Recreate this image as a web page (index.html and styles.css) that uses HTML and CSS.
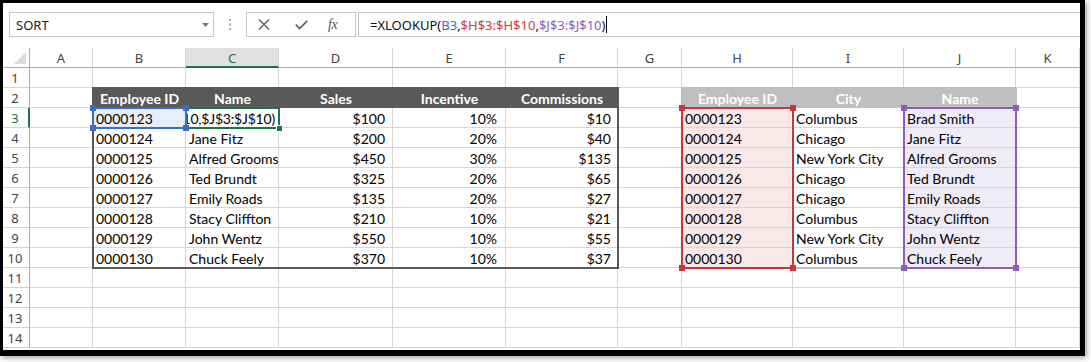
FILE: index.html
```html
<!DOCTYPE html>
<html>
<head>
<meta charset="utf-8">
<link rel="stylesheet" href="styles.css">
</head>
<body>
<div class="frame">
  <div class="fbar">
    <div class="namebox"><span>SORT</span><svg class="dd" width="7" height="4" viewBox="0 0 7 4"><polygon points="0,0 7,0 3.5,4" fill="#7a7a7a"/></svg></div>
    <div class="dots"><svg width="2" height="11" viewBox="0 0 2 11"><rect x="0" y="0" width="2" height="2" fill="#b0b0b0"/><rect x="0" y="4.5" width="2" height="2" fill="#b0b0b0"/><rect x="0" y="9" width="2" height="2" fill="#b0b0b0"/></svg></div>
    <div class="btns">
      <svg class="ix" width="12" height="11" viewBox="0 0 12 11"><path d="M1 0.5 L11 10.5 M11 0.5 L1 10.5" stroke="#5f5f5f" stroke-width="1.4" fill="none"/></svg>
      <svg class="iv" width="13" height="10" viewBox="0 0 13 10"><path d="M0.8 4.6 L4.6 8.6 L12.2 0.8" stroke="#5f5f5f" stroke-width="1.7" fill="none"/></svg>
      <span class="fx">fx</span>
    </div>
    <div class="finput"><span>=XLOOKUP(</span><span class="cb">B3</span><span>,</span><span class="cr">$H$3:$H$10</span><span>,</span><span class="cp">$J$3:$J$10</span><span>)</span><span class="caret"></span></div>
  </div>
  <div class="sheet">
    <div class="grid">
      <div class="corner"><svg width="12" height="12" viewBox="0 0 12 12"><polygon points="12,0 12,12 0,12" fill="#dcdcdc"/></svg></div>
      <div class="ch">A</div><div class="ch">B</div><div class="ch sel">C</div><div class="ch">D</div><div class="ch">E</div><div class="ch">F</div><div class="ch">G</div><div class="ch">H</div><div class="ch">I</div><div class="ch">J</div><div class="ch">K</div>

      <div class="rh">1</div><div class="c"></div><div class="c"></div><div class="c"></div><div class="c"></div><div class="c"></div><div class="c"></div><div class="c"></div><div class="c"></div><div class="c"></div><div class="c"></div><div class="c"></div>

      <div class="rh">2</div><div class="c"></div><div class="c hd">Employee ID</div><div class="c hd">Name</div><div class="c hd">Sales</div><div class="c hd">Incentive</div><div class="c hd">Commissions</div><div class="c"></div><div class="c hg">Employee ID</div><div class="c hg">City</div><div class="c hg">Name</div><div class="c"></div>

      <div class="rh sel">3</div><div class="c"></div><div class="c fb">0000123</div><div class="c edit"><span>$10,$J$3:$J$10)</span></div><div class="c r">$100</div><div class="c r e">10%</div><div class="c r f">$10</div><div class="c"></div><div class="c fr">0000123</div><div class="c">Columbus</div><div class="c fp">Brad Smith</div><div class="c"></div>

      <div class="rh">4</div><div class="c"></div><div class="c">0000124</div><div class="c">Jane Fitz</div><div class="c r">$200</div><div class="c r e">20%</div><div class="c r f">$40</div><div class="c"></div><div class="c fr">0000124</div><div class="c">Chicago</div><div class="c fp">Jane Fitz</div><div class="c"></div>

      <div class="rh">5</div><div class="c"></div><div class="c">0000125</div><div class="c">Alfred Grooms</div><div class="c r">$450</div><div class="c r e">30%</div><div class="c r f">$135</div><div class="c"></div><div class="c fr">0000125</div><div class="c">New York City</div><div class="c fp">Alfred Grooms</div><div class="c"></div>

      <div class="rh">6</div><div class="c"></div><div class="c">0000126</div><div class="c">Ted Brundt</div><div class="c r">$325</div><div class="c r e">20%</div><div class="c r f">$65</div><div class="c"></div><div class="c fr">0000126</div><div class="c">Chicago</div><div class="c fp">Ted Brundt</div><div class="c"></div>

      <div class="rh">7</div><div class="c"></div><div class="c">0000127</div><div class="c">Emily Roads</div><div class="c r">$135</div><div class="c r e">20%</div><div class="c r f">$27</div><div class="c"></div><div class="c fr">0000127</div><div class="c">Chicago</div><div class="c fp">Emily Roads</div><div class="c"></div>

      <div class="rh">8</div><div class="c"></div><div class="c">0000128</div><div class="c">Stacy Cliffton</div><div class="c r">$210</div><div class="c r e">10%</div><div class="c r f">$21</div><div class="c"></div><div class="c fr">0000128</div><div class="c">Columbus</div><div class="c fp">Stacy Cliffton</div><div class="c"></div>

      <div class="rh">9</div><div class="c"></div><div class="c">0000129</div><div class="c">John Wentz</div><div class="c r">$550</div><div class="c r e">10%</div><div class="c r f">$55</div><div class="c"></div><div class="c fr">0000129</div><div class="c">New York City</div><div class="c fp">John Wentz</div><div class="c"></div>

      <div class="rh">10</div><div class="c"></div><div class="c">0000130</div><div class="c">Chuck Feely</div><div class="c r">$370</div><div class="c r e">10%</div><div class="c r f">$37</div><div class="c"></div><div class="c fr">0000130</div><div class="c">Columbus</div><div class="c fp">Chuck Feely</div><div class="c"></div>

      <div class="rh">11</div><div class="c"></div><div class="c"></div><div class="c"></div><div class="c"></div><div class="c"></div><div class="c"></div><div class="c"></div><div class="c"></div><div class="c"></div><div class="c"></div><div class="c"></div>
      <div class="rh">12</div><div class="c"></div><div class="c"></div><div class="c"></div><div class="c"></div><div class="c"></div><div class="c"></div><div class="c"></div><div class="c"></div><div class="c"></div><div class="c"></div><div class="c"></div>
      <div class="rh">13</div><div class="c"></div><div class="c"></div><div class="c"></div><div class="c"></div><div class="c"></div><div class="c"></div><div class="c"></div><div class="c"></div><div class="c"></div><div class="c"></div><div class="c"></div>
      <div class="rh">14</div><div class="c"></div><div class="c"></div><div class="c"></div><div class="c"></div><div class="c"></div><div class="c"></div><div class="c"></div><div class="c"></div><div class="c"></div><div class="c"></div><div class="c"></div>
    </div>
    <div class="ovl">
      <div class="ov ov-tbl"></div>
      <div class="ov ov-rt"></div>
      <div class="ov ov-c3"><i class="fill"></i></div>
      <div class="ov ov-b3"><i class="h tl"></i><i class="h tr"></i><i class="h bl"></i><i class="h br"></i></div>
      <div class="ov ov-h"><i class="h tl"></i><i class="h tr"></i><i class="h bl"></i><i class="h br"></i></div>
      <div class="ov ov-j"><i class="h tl"></i><i class="h tr"></i><i class="h bl"></i><i class="h br"></i></div>
    </div>
  </div>
</div>
</body>
</html>
```
FILE: styles.css
```css
* { box-sizing: border-box; margin: 0; padding: 0; }
html, body { width: 1091px; height: 362px; overflow: hidden; background: #fff; }
body { font-family: "Lato", "Liberation Sans", sans-serif; }

.frame {
  width: 1085px;
  height: 356px;
  border-style: solid;
  border-color: #000;
  border-width: 3px 5px 6px 3px;
  background: #fff;
  box-shadow: 2px 2px 5px rgba(0, 0, 0, 0.35);
  overflow: hidden;
}

/* formula bar */
.fbar {
  height: 45px;
  display: flex;
  align-items: flex-start;
  padding: 9px 0 0 6px;
  font-family: "Noto Sans", "DejaVu Sans", sans-serif;
  font-size: 13px;
  color: #222;
}
.namebox {
  width: 205px;
  height: 25px;
  border: 1px solid #c6c6c6;
  display: flex;
  align-items: center;
  justify-content: space-between;
  padding: 0 4px 0 6px;
}
.dd { margin-top: 1px; }
.dots {
  width: 32px;
  height: 25px;
  display: flex;
  align-items: center;
  justify-content: center;
}
.btns {
  width: 110px;
  height: 25px;
  border: 1px solid #c6c6c6;
  display: flex;
  align-items: center;
  padding-left: 11px;
}
.iv { margin-left: 25px; margin-top: 1px; }
.fx {
  margin-left: 20px;
  font-family: "Liberation Serif", serif;
  font-style: italic;
  font-size: 14px;
  color: #555;
  letter-spacing: -0.5px;
}
.finput {
  flex: 1;
  height: 25px;
  margin-left: 2px;
  border: 1px solid #c6c6c6;
  border-right: none;
  display: flex;
  align-items: center;
  padding-left: 11px;
  white-space: pre;
  color: #111;
}
.cb { color: #3a6ec6; }
.cr { color: #cf3a3e; }
.cp { color: #8c5cbf; }
.caret { width: 1px; height: 17px; background: #000; margin-left: 1px; }

/* sheet */
.sheet { position: relative; height: 302px; }
.grid, .ovl {
  display: grid;
  grid-template-columns: 27px 63px 93px 93px 114px 113px 112px 64px 111px 111px 112px 64px;
  grid-template-rows: repeat(15, 20px);
}
.ovl { position: absolute; top: 0; left: 0; right: 0; bottom: 0; pointer-events: none; }

.corner {
  border-right: 1px solid #ababab;
  border-bottom: 1px solid #ababab;
  display: flex;
  align-items: flex-end;
  justify-content: flex-end;
  padding: 0 3px 3px 0;
}
.ch {
  border-right: 1px solid #d4d4d4;
  border-bottom: 1px solid #ababab;
  font-family: "Noto Sans", "DejaVu Sans", sans-serif;
  font-size: 13px;
  line-height: 18px;
  padding-top: 1px;
  color: #444;
  text-align: center;
}
.ch.sel {
  background: #e1e1e1;
  color: #217346;
  border-bottom: 2px solid #217346;
}
.rh {
  border-right: 1px solid #ababab;
  border-bottom: 1px solid #d4d4d4;
  font-family: "Noto Sans", "DejaVu Sans", sans-serif;
  font-size: 13px;
  line-height: 19px;
  padding-top: 1px;
  color: #444;
  text-align: center;
  padding-right: 2px;
}
.rh.sel {
  color: #217346;
  border-right: 2px solid #217346;
  padding-right: 1px;
}

.c {
  border-right: 1px solid #d6d6d6;
  border-bottom: 1px solid #d6d6d6;
  font-size: 14px;
  line-height: 19px;
  padding: 1px 2px 0 3px;
  white-space: nowrap;
  overflow: hidden;
  color: #000;
}
.r { text-align: right; padding-right: 7px; }
.r.e { padding-right: 8px; }
.r.f { padding-right: 6px; }
.hd {
  background: #595959;
  border-color: #595959;
  color: #fff;
  font-weight: bold;
  text-align: center;
}
.hg {
  background: #bfbfbf;
  border-color: #bfbfbf;
  color: #fff;
  font-weight: bold;
  text-align: center;
}
.fb { background: #e8eef9; }
.fr { background: #f9e8e8; }
.fp { background: #efebf7; }
.edit {
  display: flex;
  justify-content: flex-end;
  padding-right: 3px;
  padding-left: 0;
  letter-spacing: -0.2px;
}

/* overlays */
.ov { position: relative; margin: -1px; border: 2px solid transparent; }
.ov-tbl { grid-row: 3 / 12; grid-column: 3 / 8; border-color: #595959; }
.ov-rt { grid-row: 3 / 12; grid-column: 9 / 12; border-color: #bfbfbf; }
.ov-c3 { grid-row: 4 / 5; grid-column: 4 / 5; border-color: #217346; }
.ov-b3 { grid-row: 4 / 5; grid-column: 3 / 4; border-color: #3a6ec6; }
.ov-h { grid-row: 4 / 12; grid-column: 9 / 10; border-color: #c4373f; }
.ov-j { grid-row: 4 / 12; grid-column: 11 / 12; border-color: #8c5cbf; }

.h { position: absolute; width: 6px; height: 6px; z-index: 5; }
.tl { top: -4px; left: -4px; }
.tr { top: -4px; right: -4px; }
.bl { bottom: -4px; left: -4px; }
.br { bottom: -4px; right: -4px; }
.ov-b3 .h { background: #3a6ec6; }
.ov-h .h { background: #c4373f; }
.ov-j .h { background: #8c5cbf; }
.fill {
  position: absolute;
  right: -5px;
  bottom: -5px;
  width: 7px;
  height: 7px;
  background: #217346;
  border: 1px solid #fff;
}
```
